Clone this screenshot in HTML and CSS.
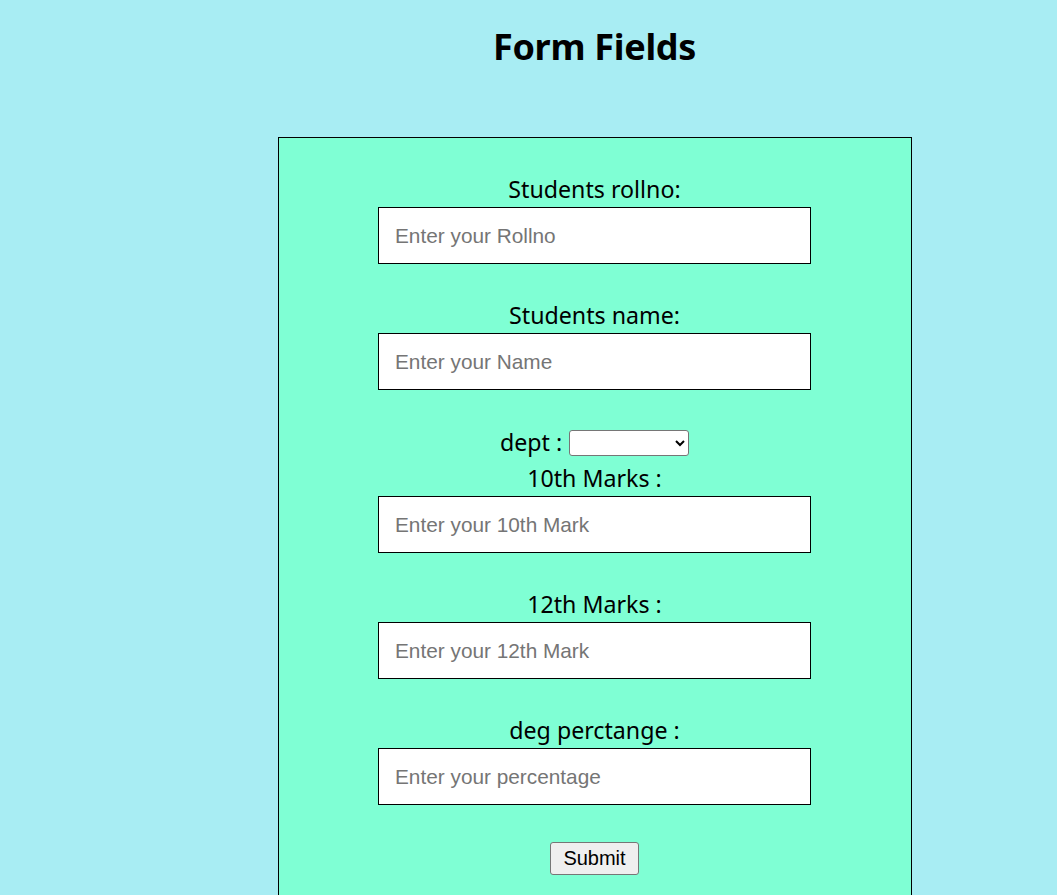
FILE: index.html
```html
<!DOCTYPE html>
<html>
<head>
<meta charset="utf-8">
<link rel="stylesheet" href="styles.css">
</head>
<body>
<div class="page">
  <h1 class="title">Form Fields</h1>
  <form class="form">
    <div class="field">
      <label class="label">Students rollno:</label>
      <input class="input" type="text" placeholder="Enter your Rollno">
    </div>
    <div class="field">
      <label class="label">Students name:</label>
      <input class="input" type="text" placeholder="Enter your Name">
    </div>
    <div class="dept-row">
      <label class="label">dept :</label>
      <select class="select"><option></option></select>
    </div>
    <div class="field field-tight">
      <label class="label">10th Marks :</label>
      <input class="input" type="text" placeholder="Enter your 10th Mark">
    </div>
    <div class="field">
      <label class="label">12th Marks :</label>
      <input class="input" type="text" placeholder="Enter your 12th Mark">
    </div>
    <div class="field">
      <label class="label">deg perctange :</label>
      <input class="input" type="text" placeholder="Enter your percentage">
    </div>
    <div class="actions">
      <button class="submit" type="button">Submit</button>
    </div>
  </form>
</div>
</body>
</html>
```

FILE: styles.css
```css
html, body {
  margin: 0;
  padding: 0;
  background: #a8edf3;
  height: 100%;
  overflow: hidden;
}
.page {
  margin-left: 140px;
  width: 909px;
  display: flex;
  flex-direction: column;
  align-items: center;
  font-family: "Noto Sans", "Open Sans", sans-serif;
  color: #000;
}
.title {
  margin: 24px 0 0 0;
  height: 113px;
  font-size: 36px;
  font-weight: 700;
  line-height: 46px;
  letter-spacing: -0.3px;
}
.form {
  box-sizing: border-box;
  width: 634px;
  height: 800px;
  border: 1px solid #000;
  background: #7fffd4;
  padding-top: 36px;
  display: flex;
  flex-direction: column;
  align-items: center;
}
.field {
  display: flex;
  flex-direction: column;
  align-items: center;
  gap: 1px;
  margin-bottom: 36px;
}
.field-tight {
  margin-top: 5px;
}
.label {
  font-size: 23.2px;
  line-height: 30px;
  height: 32px;
}
.input {
  box-sizing: border-box;
  width: 433px;
  height: 57px;
  border: 1px solid #000;
  background: #fff;
  padding: 0 16px;
  font-family: "Liberation Sans", Arial, sans-serif;
  font-size: 20.8px;
  outline: none;
}
.input::placeholder {
  color: #757575;
}
.dept-row {
  display: flex;
  align-items: center;
  gap: 7px;
  height: 32px;
}
.dept-row .label {
  height: 30px;
}
.select {
  box-sizing: border-box;
  width: 120px;
  height: 26px;
  border: 1px solid #767676;
  border-radius: 3px;
  background: #fff;
  margin-top: 2px;
}
.actions {
  margin-top: 1px;
}
.submit {
  box-sizing: border-box;
  width: 89px;
  height: 33px;
  font-family: "Liberation Sans", Arial, sans-serif;
  font-size: 20px;
  color: #000;
  background: #efefef;
  border: 1px solid #767676;
  border-radius: 3px;
  padding: 0;
}
```
